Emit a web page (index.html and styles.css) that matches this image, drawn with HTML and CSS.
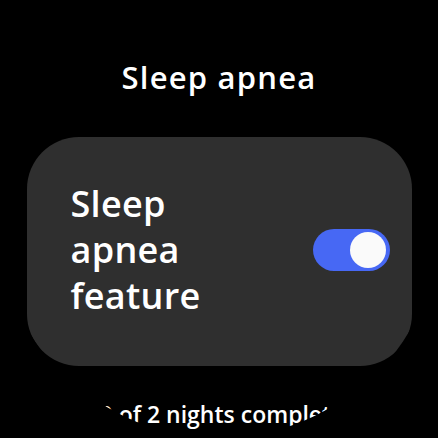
FILE: index.html
```html
<!DOCTYPE html>
<html lang="en">
<head>
    <meta charset="UTF-8">
    <meta name="viewport" content="width=device-width, initial-scale=1.0">
    <title>Sleep apnea</title>
    <link rel="stylesheet" href="styles.css">
</head>
<body>
    <div class="watch-screen">
        <h1 class="screen-title">Sleep apnea</h1>

        <div class="setting-card">
            <div class="setting-label">Sleep apnea feature</div>
            <div class="toggle is-on" role="switch" aria-checked="true">
                <div class="toggle-thumb"></div>
            </div>
        </div>

        <div class="progress-info">0 of 2 nights complete</div>
    </div>
</body>
</html>
```

FILE: styles.css
```css
body {
    margin: 0;
    background: #000000;
    color: #ffffff;
    font-family: 'Open Sans', Roboto, sans-serif;
}

/* round watch face */
.watch-screen {
    width: 438px;
    height: 438px;
    display: flex;
    flex-direction: column;
    align-items: center;
    padding-top: 56px;
    box-sizing: border-box;
    overflow: hidden;
    clip-path: circle(221px at 50% 50%);
}

.screen-title {
    margin: 0;
    font-size: 31px;
    line-height: 42px;
    font-weight: 600;
    letter-spacing: 1.2px;
}

.setting-card {
    margin-top: 39px;
    width: 385px;
    height: 229px;
    box-sizing: border-box;
    padding: 0 22px 4px 44px;
    background: #2f2f2f;
    border-radius: 52px;
    display: flex;
    align-items: center;
    justify-content: space-between;
    flex-shrink: 0;
}

.setting-label {
    width: 170px;
    font-size: 36px;
    line-height: 46px;
    font-weight: 600;
    letter-spacing: 0.3px;
}

.toggle {
    width: 77px;
    height: 42px;
    border-radius: 21px;
    background: #4768f4;
    display: flex;
    align-items: center;
    padding: 0 4px;
    box-sizing: border-box;
}

.toggle.is-on {
    justify-content: flex-end;
}

.toggle-thumb {
    width: 36px;
    height: 36px;
    border-radius: 50%;
    background: #fafafa;
}

/* bottom line runs into the round edge, so it gets a slightly tighter circle */
.progress-info {
    align-self: stretch;
    margin-top: 32px;
    padding-left: 6px;
    text-align: center;
    font-size: 23px;
    line-height: 32px;
    font-weight: 600;
    white-space: nowrap;
    clip-path: circle(219px at 219px -179px);
}
```
